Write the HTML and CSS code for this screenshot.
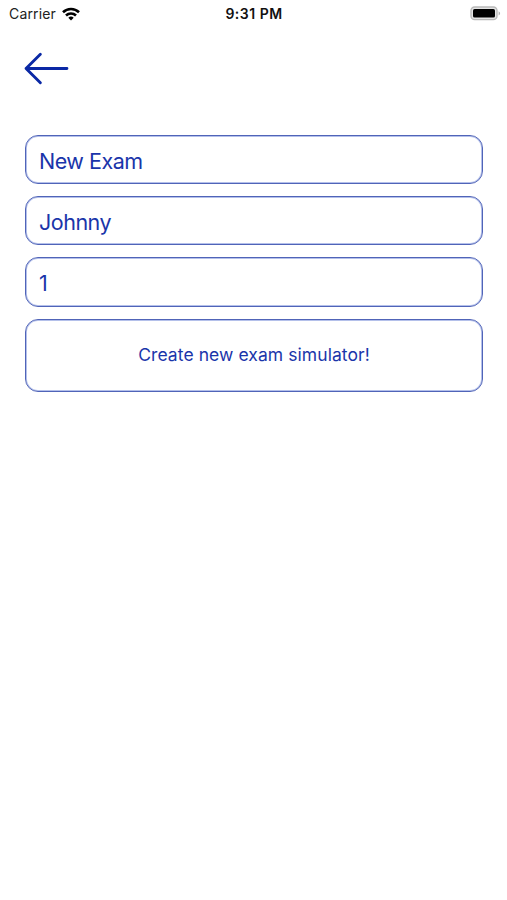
FILE: index.html
```html
<!DOCTYPE html>
<html lang="en">
<head>
  <meta charset="UTF-8">
  <meta name="viewport" content="width=device-width, initial-scale=1.0">
  <title>New Exam</title>
  <link rel="stylesheet" href="styles.css">
</head>
<body>

  <!-- Status bar -->
  <header class="status-bar">
    <div class="carrier">
      <span>Carrier</span>
      <svg class="wifi" viewBox="0 0 18 14" fill="none" stroke="#000" stroke-width="2.6">
        <path d="M1 5.2a11.5 11.5 0 0 1 16 0"/>
        <path d="M4 8.5a7.2 7.2 0 0 1 10 0"/>
        <path d="M9 13.6L6.3 10.8a3.9 3.9 0 0 1 5.4 0z" fill="#000" stroke="none"/>
      </svg>
    </div>
    <span class="time">9:31 PM</span>
    <svg class="battery" viewBox="0 0 31 15">
      <rect x="1" y="1" width="26" height="12.6" rx="3.6" fill="#e4e4e4" stroke="#b9b9b9" stroke-width="1.4"/>
      <rect x="3" y="3" width="22" height="8.6" rx="1.6" fill="#000"/>
      <path d="M28.6 5.2c2 .8 2 3.4 0 4.2z" fill="#b0b0b0"/>
    </svg>
  </header>

  <!-- Back button -->
  <nav class="top-nav">
    <button class="back-button" type="button" aria-label="Back">
      <svg viewBox="0 0 44 32" fill="none" stroke="#0a28a5" stroke-width="2.8" stroke-linecap="round" stroke-linejoin="round">
        <path d="M16 2L2 16l14 14M2 16h40"/>
      </svg>
    </button>
  </nav>

  <!-- Exam form -->
  <form class="exam-form">
    <input class="field" type="text" value="New Exam" aria-label="Exam name">
    <input class="field" type="text" value="Johnny" aria-label="Author">
    <input class="field" type="text" value="1" aria-label="Number">
    <button class="create-button" type="button">Create new exam simulator!</button>
  </form>

</body>
</html>
```
FILE: styles.css
```css
* {
  margin: 0;
  padding: 0;
  box-sizing: border-box;
  font-family: Inter, "Liberation Sans", sans-serif;
}

body {
  height: 100vh;
  overflow: hidden;
  background-color: #fff;
}

/* Status bar */
.status-bar {
  display: grid;
  grid-template-columns: 1fr auto 1fr;
  align-items: center;
  height: 27px;
  padding: 0 6px 0 9px;
  font-size: 14px;
  color: #222;
}

.carrier {
  display: flex;
  align-items: center;
  gap: 6px;
  letter-spacing: 0.15px;
}

.wifi {
  width: 18px;
  height: 14px;
}

.time {
  margin-right: 2px;
  font-weight: 600;
  letter-spacing: 0.5px;
  color: #111;
}

.battery {
  width: 31px;
  height: 15px;
  justify-self: end;
}

/* Back button */
.top-nav {
  height: 108px;
  padding: 25px 24px 0;
}

.back-button {
  display: block;
  width: 45px;
  height: 33px;
  border: none;
  background: none;
}

.back-button svg {
  display: block;
  width: 100%;
  height: 100%;
}

/* Form */
.exam-form {
  display: flex;
  flex-direction: column;
  gap: 12px;
  padding: 0 24px 0 25px;
}

.field,
.create-button {
  width: 100%;
  border: 1px solid #5064b8;
  border-radius: 13px;
  box-shadow: inset 0 0 0 1px #b4c0ea;
  background-color: #fff;
  color: #1a35aa;
  outline: none;
}

.field {
  height: 49.2px;
  padding: 3px 13px 0;
  font-size: 21.5px;
  letter-spacing: -0.5px;
}

.create-button {
  height: 73.5px;
  padding-bottom: 2px;
  font-size: 17.5px;
  letter-spacing: 0.07px;
}
```
